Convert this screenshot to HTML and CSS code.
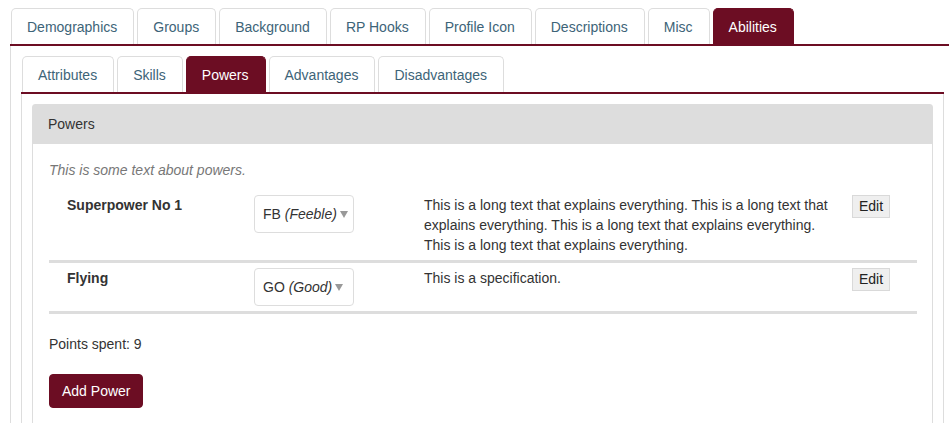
FILE: index.html
```html
<!DOCTYPE html>
<html lang="en">
<head>
<meta charset="utf-8">
<title>Abilities - Powers</title>
<link rel="stylesheet" href="styles.css">
</head>
<body>
<div class="page">
  <div class="tabset outer">
    <ul class="tabs">
      <li class="tab">Demographics</li>
      <li class="tab">Groups</li>
      <li class="tab">Background</li>
      <li class="tab">RP Hooks</li>
      <li class="tab">Profile Icon</li>
      <li class="tab">Descriptions</li>
      <li class="tab">Misc</li>
      <li class="tab active">Abilities</li>
    </ul>
    <div class="tab-body">
      <div class="tabset inner">
        <ul class="tabs">
          <li class="tab">Attributes</li>
          <li class="tab">Skills</li>
          <li class="tab active">Powers</li>
          <li class="tab">Advantages</li>
          <li class="tab">Disadvantages</li>
        </ul>
        <div class="tab-body">
          <div class="panel">
            <div class="panel-head">Powers</div>
            <div class="panel-body">
              <p class="intro">This is some text about powers.</p>
              <div class="power-list">
                <div class="power-row">
                  <div class="power-name">Superpower No 1</div>
                  <div class="power-rank">
                    <div class="select"><span>FB <em>(Feeble)</em></span><span class="caret"></span></div>
                  </div>
                  <div class="power-desc">This is a long text that explains everything. This is a long text that explains everything. This is a long text that explains everything. This is a long text that explains everything.</div>
                  <div class="power-actions"><button class="btn-edit" type="button">Edit</button></div>
                </div>
                <div class="power-row">
                  <div class="power-name">Flying</div>
                  <div class="power-rank">
                    <div class="select"><span>GO <em>(Good)</em></span><span class="caret"></span></div>
                  </div>
                  <div class="power-desc">This is a specification.</div>
                  <div class="power-actions"><button class="btn-edit" type="button">Edit</button></div>
                </div>
              </div>
              <p class="points">Points spent: 9</p>
              <button class="btn-primary" type="button">Add Power</button>
            </div>
          </div>
        </div>
      </div>
    </div>
  </div>
</div>
</body>
</html>
```

FILE: styles.css
```css
html, body {
  margin: 0;
  padding: 0;
  background: #fff;
}

body {
  overflow: hidden;
  font-family: "Liberation Sans", Arial, Helvetica, sans-serif;
  font-size: 14px;
  line-height: 20px;
  color: #333;
}

.page {
  padding: 8px 0 0 10px;
}

.outer {
  width: 945px;
}

.tabs {
  list-style: none;
  margin: 0;
  padding: 0 0 0 1px;
  display: flex;
  gap: 3px;
  border-bottom: 2px solid #6c0d23;
}

.tab {
  border: 1px solid #ddd;
  border-bottom: 0;
  border-radius: 5px 5px 0 0;
  padding: 8px 16px 7px 15px;
  color: #3d6478;
  white-space: nowrap;
}

.tab.active {
  background: #6c0d23;
  border-color: #6c0d23;
  color: #fff;
}

.tab-body {
  border-left: 1px solid #ddd;
  border-right: 1px solid #ddd;
  padding: 10px;
}

.panel {
  border: 1px solid #ddd;
  border-radius: 3px 3px 0 0;
}

.panel-head {
  background: #ddd;
  padding: 9px 15px 10px;
  color: #333;
}

.panel-body {
  padding: 16px 15px 30px 16px;
}

.intro {
  margin: 0 0 10px;
  font-style: italic;
  color: #777;
}

.power-row {
  display: grid;
  grid-template-columns: 205px 170px 428px 1fr;
  padding: 5px 0;
  border-bottom: 3px solid #ddd;
}

.power-name {
  padding-left: 18px;
  font-weight: bold;
}

.select {
  box-sizing: border-box;
  width: 100px;
  height: 38px;
  border: 1px solid #ddd;
  border-radius: 4px;
  padding: 0 0 0 8px;
  display: flex;
  align-items: center;
  gap: 3px;
  white-space: nowrap;
}

.caret {
  width: 0;
  height: 0;
  border-left: 4px solid transparent;
  border-right: 4px solid transparent;
  border-top: 7px solid #999;
  margin-top: 1px;
}

.power-desc {
  padding-right: 8px;
}

.btn-edit {
  font-family: inherit;
  font-size: 14px;
  line-height: 19px;
  color: #222;
  background: #efefef;
  border: 1px solid #d9d9d9;
  border-radius: 0;
  padding: 1px 6px;
  margin: 0;
}

.points {
  margin: 20px 0 20px;
}

.btn-primary {
  font-family: inherit;
  font-size: 14px;
  line-height: 20px;
  color: #fff;
  background: #6c0d23;
  border: 1px solid #6c0d23;
  border-radius: 4px;
  padding: 6px 12px;
  margin: 0;
}
```
